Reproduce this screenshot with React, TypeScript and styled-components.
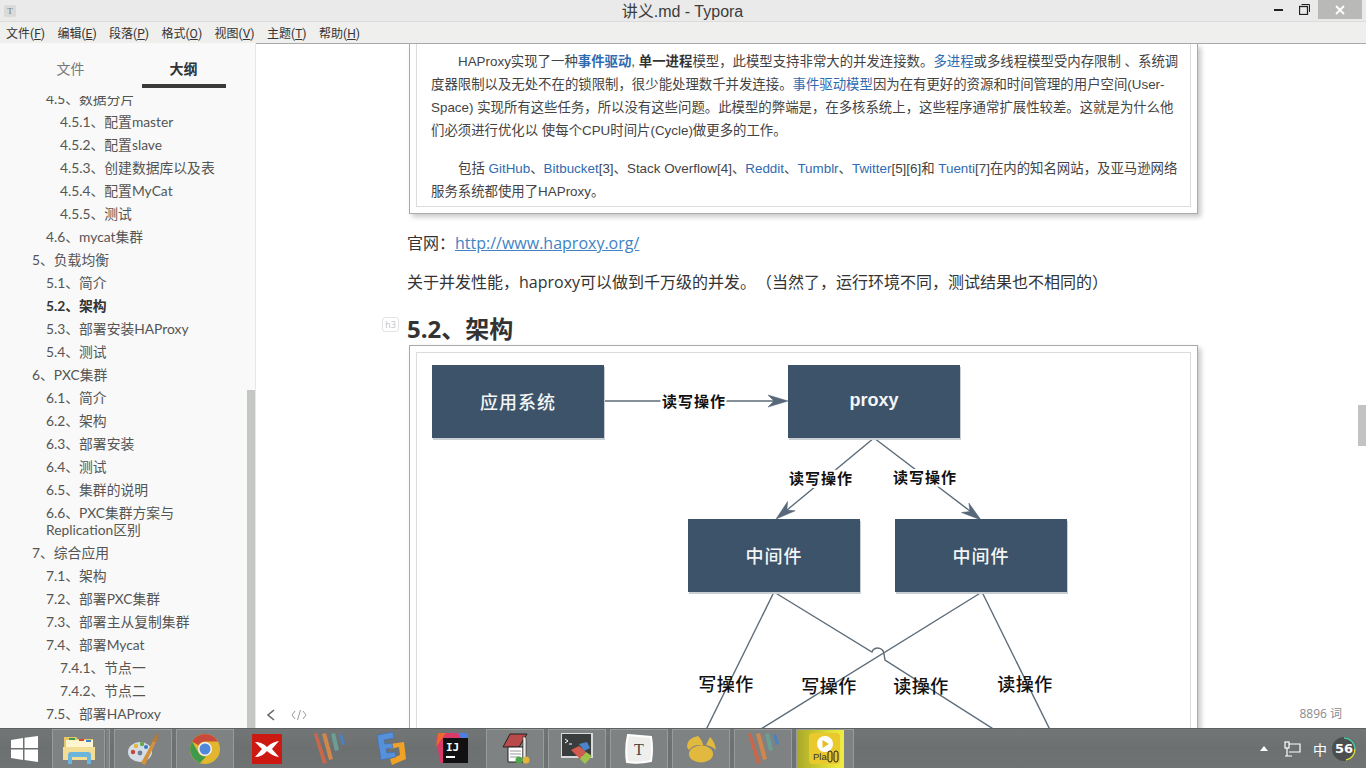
import React from "react";
import styled, { createGlobalStyle } from "styled-components";

const Global = createGlobalStyle`
  html, body { margin: 0; padding: 0; height: 100%; overflow: hidden; }
  * { box-sizing: border-box; }
  body { font-family: "Open Sans", "Noto Sans CJK SC", sans-serif; color: #333; text-spacing-trim: space-all; }
`;

const Page = styled.div`
  width: 1366px; height: 768px; display: flex; flex-direction: column; overflow: hidden; background: #fff;
`;
const TitleBar = styled.div`
  height: 22px; flex: none; display: flex; align-items: flex-start; background: #e9eae9;
  border-bottom: 1px solid #dcdddb; padding-left: 4px;
`;
const AppGlyph = styled.div`
  width: 12px; height: 12px; margin-top: 5px; background: #dadbd9; border-radius: 2px; color: #777;
  font: 9px/12px "Liberation Serif", serif; text-align: center; flex: none;
`;
const TitleText = styled.div`
  flex: 1; text-align: center; font-size: 16px; line-height: 23px; color: #3c3c3c; padding-left: 84px;
  font-family: "Liberation Sans", "Noto Sans CJK SC", sans-serif;
`;
const WindowButtons = styled.div`
  display: flex; align-items: flex-start; flex: none; margin-right: 4px;
`;
const WinButton = styled.div<{ $close?: boolean }>`
  width: ${p => (p.$close ? "44px" : "26px")}; height: 19px; display: flex; align-items: center; justify-content: center;
  background: ${p => (p.$close ? "#b9bab8" : "transparent")};
  margin-left: ${p => (p.$close ? "1px" : "0")};
`;
const MenuBar = styled.div`
  height: 21px; flex: none; display: flex; align-items: center; gap: 12.5px; padding-left: 6px; background: #eff0ee;
  font-size: 12px; color: #333; font-family: Roboto, "Noto Sans CJK SC", sans-serif;
`;
const MenuItem = styled.span`
  white-space: nowrap; u { text-underline-offset: 1px; }
`;
const Body = styled.div`
  flex: 1; min-height: 0; display: flex;
`;
const Sidebar = styled.aside`
  width: 256px; flex: none; display: flex; flex-direction: column; background: #f8f9f8; position: relative;
  border-right: 1px solid #e6e7e6;
`;
const Tabs = styled.div`
  height: 53px; flex: none; display: grid; grid-template-columns: 113px 113px; padding-left: 14px;
`;
const Tab = styled.div<{ $active?: boolean }>`
  height: 45px; display: flex; justify-content: center; align-items: center; font-size: 14px; padding-top: 6px; position: relative;
  padding-bottom: 2px;
  color: ${p => (p.$active ? "#333" : "#777")}; font-weight: ${p => (p.$active ? 700 : 400)};
  ${p => p.$active && `&::after { content: ""; position: absolute; left: 15px; right: 14px; bottom: 0; height: 4px; background: #3a3b38; }`}
`;
const Outline = styled.div`
  flex: 1; min-height: 0; overflow: hidden;
`;
const OutlineList = styled.ul`
  list-style: none; margin: -9.5px 0 0; padding: 0 25px 0 0;
`;
const OutlineRow = styled.li<{ $level: number; $bold?: boolean }>`
  padding: 3px 0 3px ${p => (p.$level === 1 ? 32 : p.$level === 2 ? 46 : 60)}px;
  font-family: Lato, "Noto Sans CJK SC", sans-serif;
  font-size: 13.8px; line-height: 17px; color: ${p => (p.$bold ? "#333" : "#555")}; font-weight: ${p => (p.$bold ? 700 : 400)};
`;
const SideThumb = styled.div`
  position: absolute; right: 0; top: 347px; bottom: 0; width: 8px; background: #c5c7c5;
`;
const Main = styled.main`
  flex: 1; min-width: 0; position: relative; overflow: hidden; background: #fff; border-top: 1px solid #a8a9a8;
  padding-left: 151px;
`;
const Frame = styled.div<{ $clipTop?: boolean }>`
  width: 789px; margin-left: 2px; padding: ${p => (p.$clipTop ? "0 6px 6px" : "6px 6px 0")};
  border: 1px solid #a9aaa9; border-top-width: ${p => (p.$clipTop ? 0 : 1)}px;
  box-shadow: 3px 3px 5px rgba(0,0,0,.22); background: #fff;
`;
const FrameInner = styled.div<{ $clipTop?: boolean }>`
  border: 1px solid #dcdcdc; border-top-width: ${p => (p.$clipTop ? 0 : 1)}px;
  ${p => !p.$clipTop && "height: 500px;"}
`;
const Quote = styled.div`
  padding: 6px 8px 3px 14px; font: 13.4px/23px "Liberation Sans", "Noto Sans CJK SC", sans-serif; color: #444;
`;
const QuoteLine = styled.div<{ $indent?: boolean; $gap?: boolean }>`
  white-space: nowrap;
  padding-left: ${p => (p.$indent ? "27px" : "0")};
  margin-top: ${p => (p.$gap ? "15px" : "0")};
`;
const WikiLink = styled.span<{ $bold?: boolean }>`
  color: #2f6bb0; font-weight: ${p => (p.$bold ? 700 : 400)};
`;
const Strong = styled.b`
  color: #333;
`;
const Para = styled.p<{ $top: number }>`
  margin: ${p => p.$top}px 0 0; font-size: 16px; line-height: 26px; color: #333; white-space: nowrap;
`;
const DocLink = styled.span`
  color: #4183c4; text-decoration: underline;
`;
const Heading = styled.h3`
  margin: 19px 0 1px; font-size: 24px; line-height: 30px; font-weight: 700; color: #333; position: relative;
`;
const HBadge = styled.span`
  position: absolute; left: -25px; top: 3px; width: 17px; height: 15px; border: 1px solid #e2e3e2; border-radius: 3px;
  font-size: 9px; line-height: 13px; font-weight: 400; color: #c2c3c2; text-align: center;
`;
const DiagramSvg = styled.svg`
  display: block; width: 773px; height: 400px;
`;
const FooterNav = styled.div`
  position: absolute; left: 10px; bottom: 6px; display: flex; align-items: center; gap: 15px; color: #777;
`;
const WordCount = styled.div`
  position: absolute; right: 24px; bottom: 6px; font-size: 12px; line-height: 17px; color: #8a8a8a;
`;
const MainThumb = styled.div`
  position: absolute; right: 0; top: 361px; width: 8px; height: 41px; background: #c2c3c2;
`;
const Taskbar = styled.footer`
  height: 40px; flex: none; display: flex; align-items: stretch; gap: 4px;
  background: linear-gradient(#737677, #6d7071 50%, #707374);
  border-top: 1px solid #5f6263;
`;
const StartButton = styled.div`
  width: 48px; display: flex; align-items: center; justify-content: center; flex: none;
`;
const TaskButton = styled.div<{ $plain?: boolean; $w?: number }>`
  width: ${p => p.$w ?? 58}px; flex: none; display: flex; align-items: center; justify-content: center;
  background: ${p => (p.$plain ? "transparent" : "#7f8282")};
  border: 1px solid ${p => (p.$plain ? "transparent" : "#999b9b")};
  border-bottom: 0;
  margin-right: ${p => (p.$w === 53 ? "-3px" : "0")};
`;
const PlayButton = styled(TaskButton)`
  background: linear-gradient(90deg, #a9a828 0, #e2df38 60%, #f1ec45 84%, #7f8282 84%);
`;
const StackTab = styled.div`
  width: 4px; flex: none; background: #7f8282; border: 1px solid #999b9b; border-bottom: 0; border-left: 0;
`;
const Tray = styled.div`
  margin-left: auto; display: flex; align-items: center; padding-right: 10px; color: #fff;
`;
const TrayArrow = styled.div`
  width: 0; height: 0; border: 4px solid transparent; border-top: 0; border-bottom: 5px solid #fff; margin-right: 16px;
`;
const ImeLabel = styled.span`
  font-size: 14px; margin: 0 5px 0 12px; color: #fff;
  font-family: "Noto Sans CJK SC", sans-serif; line-height: 20px;
`;
const Gauge = styled.div`
  position: relative; width: 24px; height: 24px; border-radius: 50%; background: #4b4d4e;
  font: 700 13px/24px "DejaVu Sans", sans-serif; color: #fff; text-align: center;
  svg { position: absolute; inset: 0; }
`;
const PlayLabel = styled.text`
  font: 400 9.5px "Liberation Sans", sans-serif; fill: #333;
`;

const outline: [number, string, boolean?][] = [
  [2, "4.5、数据分片"], [3, "4.5.1、配置master"], [3, "4.5.2、配置slave"], [3, "4.5.3、创建数据库以及表"],
  [3, "4.5.4、配置MyCat"], [3, "4.5.5、测试"], [2, "4.6、mycat集群"], [1, "5、负载均衡"], [2, "5.1、简介"],
  [2, "5.2、架构", true], [2, "5.3、部署安装HAProxy"], [2, "5.4、测试"], [1, "6、PXC集群"], [2, "6.1、简介"],
  [2, "6.2、架构"], [2, "6.3、部署安装"], [2, "6.4、测试"], [2, "6.5、集群的说明"], [2, "6.6、PXC集群方案与 Replication区别"],
  [1, "7、综合应用"], [2, "7.1、架构"], [2, "7.2、部署PXC集群"], [2, "7.3、部署主从复制集群"], [2, "7.4、部署Mycat"],
  [3, "7.4.1、节点一"], [3, "7.4.2、节点二"], [2, "7.5、部署HAProxy"],
];

const menus: [string, string][] = [["文件", "F"], ["编辑", "E"], ["段落", "P"], ["格式", "O"], ["视图", "V"], ["主题", "T"], ["帮助", "H"]];

const diagramFont = '"Liberation Sans", "Noto Sans CJK SC", sans-serif';

const Node = ({ x, y, label }: { x: number; y: number; label: string }) => (
  <g>
    <rect x={x + 1} y={y + 2} width={172} height={73} fill="#c9ced3" />
    <rect x={x} y={y} width={172} height={73} fill="#3c5369" />
    <text x={x + 86} y={y + (label === "proxy" ? 35 : 38)} textAnchor="middle" dominantBaseline="central" fill="#f4f5f6" fontSize={18} fontWeight={label === "proxy" ? 700 : 500} letterSpacing={label === "proxy" ? 0 : 1} fontFamily={diagramFont}>{label}</text>
  </g>
);

const EdgeLabel = ({ x, y, label, bold, size = 15 }: { x: number; y: number; label: string; bold?: boolean; size?: number }) => (
  <text x={x} y={y} textAnchor="middle" dominantBaseline="central" fontSize={size} fontWeight={bold ? 700 : 500} fill="#111" letterSpacing={bold ? 1 : 0.5} stroke="#fff" strokeWidth={bold ? 4 : 0} paintOrder="stroke" fontFamily={diagramFont}>{label}</text>
);

const Arrow = ({ d }: { d: string }) => <path d={d} fill="#56687a" stroke="#4d5d6c" strokeWidth={0.5} />;

const Diagram = () => (
  <DiagramSvg viewBox="417 353 773 400">
    <g fill="none" stroke="#5c6b78" strokeWidth={1.4}>
      <path d="M604 401H776" />
      <path d="M874 438L787 510" />
      <path d="M874 438L970 511" />
      <path d="M774 592L700 742" />
      <path d="M774 592L872 652L873 650A6.4 6.4 0 0 1 884 654L885 660L1020 746" />
      <path d="M982 592L740 742" />
      <path d="M982 592L1056 742" />
    </g>
    <Arrow d="M788 401L768 395L774 401L768 407Z" />
    <Arrow d="M776 519L787.6 501.6L786.8 510L795.2 510.8Z" />
    <Arrow d="M981 520L968.9 503.1L970 511.5L961.5 512.5Z" />
    <Node x={432} y={365} label="应用系统" />
    <Node x={788} y={365} label="proxy" />
    <Node x={688} y={519} label="中间件" />
    <Node x={895} y={519} label="中间件" />
    <EdgeLabel x={694} y={401} label="读写操作" bold />
    <EdgeLabel x={821} y={478} label="读写操作" bold />
    <EdgeLabel x={925} y={477} label="读写操作" bold />
    <EdgeLabel x={726} y={685} label="写操作" size={18} />
    <EdgeLabel x={829} y={687} label="写操作" size={18} />
    <EdgeLabel x={921} y={687} label="读操作" size={18} />
    <EdgeLabel x={1025} y={685} label="读操作" size={18} />
  </DiagramSvg>
);

const WinLogo = () => (
  <svg width="27" height="26" viewBox="0 0 27 26"><path fill="#fff" d="M0 4L12 2V12H0ZM13.5 1.8L27 0V12H13.5ZM0 13.5H12V24L0 22ZM13.5 13.5H27V26L13.5 24Z" /></svg>
);
const ExplorerIcon = () => (
  <svg width="34" height="30" viewBox="0 0 34 30">
    <path d="M2 3H14L16 5H31V26H2Z" fill="#e8c566" />
    <rect x="4" y="6" width="27" height="10" fill="#fff6cf" />
    <rect x="7" y="4" width="6" height="2" fill="#3e9a4a" /><rect x="17" y="5" width="5" height="2" fill="#d4453a" /><rect x="24" y="6" width="5" height="2" fill="#3d86c8" />
    <path d="M1 13H33V26H1Z" fill="#f3dc94" />
    <path d="M6 30V21Q6 18 9 18H26Q29 18 29 21V30H25V23H10V30Z" fill="#6bb4dc" />
  </svg>
);
const PaletteIcon = () => (
  <svg width="32" height="32" viewBox="0 0 32 32">
    <ellipse cx="13" cy="19" rx="12" ry="10" fill="#d5dde6" />
    <circle cx="6" cy="19" r="2.2" fill="#c9453c" /><circle cx="9" cy="13" r="2.2" fill="#e1b93b" /><circle cx="15" cy="11" r="2.2" fill="#63a84a" /><circle cx="19" cy="14" r="2" fill="#3a76c2" /><circle cx="13" cy="20" r="2.4" fill="#6d7f92" />
    <path d="M14 30L26 8L29 9L18 32Z" fill="#d2913a" />
    <path d="M25 8L30 0L31 9Z" fill="#b97a33" />
  </svg>
);
const ChromeIcon = () => (
  <svg width="30" height="30" viewBox="0 0 30 30">
    <circle cx="15" cy="15" r="15" fill="#e2b72f" />
    <path d="M15 0A15 15 0 0 1 28 7.5H15A7.5 7.5 0 0 0 8.5 11.2L2 7.5A15 15 0 0 1 15 0Z" fill="#c94a3a" />
    <path d="M2 7.5L8.5 18.7A7.5 7.5 0 0 0 16 22.4L10 29A15 15 0 0 1 2 7.5Z" fill="#3f9a4c" />
    <circle cx="15" cy="15" r="7" fill="#f0f1f2" /><circle cx="15" cy="15" r="5.5" fill="#4f88d8" />
  </svg>
);
const XIcon = () => (
  <svg width="30" height="30" viewBox="0 0 30 30">
    <rect width="30" height="30" rx="1" fill="#cc1a12" />
    <path d="M3 8Q10 8 15 13Q20 8 27 7L20 15L27 23Q20 22 15 17Q10 23 3 23L10 15Z" fill="#fff" />
  </svg>
);
const PyBars = () => (
  <svg width="34" height="32" viewBox="0 0 34 32">
    <path d="M2 1L5 0L15 30L11 31Z" fill="#c9674a" />
    <path d="M10 1L14 0L21 26L17 27Z" fill="#d2874a" />
    <path d="M19 1L23 0L27 17L23 18Z" fill="#6d9e94" />
    <path d="M27 2L30 1L33 11L30 12Z" fill="#4a82bf" />
  </svg>
);
const EditIcon = () => (
  <svg width="30" height="34" viewBox="0 0 30 34">
    <path d="M14 12L28 10L30 27L16 33L14 27L24 23L23 15L14 17Z" fill="#f0a226" />
    <path d="M1 3L17 0L18 6L8 8L9 12L16 11L17 16L10 17L11 21L19 20L20 25L5 28Z" fill="#5590d8" stroke="#3a6cb0" strokeWidth=".6" />
  </svg>
);
const IdeaIcon = () => (
  <svg width="34" height="32" viewBox="0 0 34 32">
    <path d="M0 4L10 0H24L32 8V30H4Z" fill="#d93a6a" /><path d="M22 0H32V18Z" fill="#4b7fe0" /><path d="M0 14L10 0H2Z" fill="#e86a2c" />
    <rect x="7" y="5" width="25" height="25" fill="#111" />
    <text x="10" y="18" fontSize="11" fontWeight="700" fill="#fff" fontFamily="DejaVu Sans Mono, monospace">IJ</text>
    <rect x="10" y="23" width="9" height="2" fill="#fff" />
  </svg>
);
const NotepadIcon = () => (
  <svg width="32" height="34" viewBox="0 0 32 34">
    <path d="M4 15L11 2H28L20 15Z" fill="#b84a4a" stroke="#222" strokeWidth="1" />
    <path d="M9 15H24V30H9Z" fill="#fff" stroke="#222" />
    <path d="M11 19H22M11 22H22M11 25H20" stroke="#999" />
    <path d="M24 4L27 6V26L24 30Z" fill="#eee" stroke="#222" strokeWidth=".6" />
    <circle cx="20" cy="28" r="3.5" fill="#49a84c" /><circle cx="27" cy="28" r="3.5" fill="#e0b63a" />
  </svg>
);
const TerminalIcon = () => (
  <svg width="32" height="32" viewBox="0 0 32 32">
    <rect x="0" y="0" width="31" height="24" fill="#3a3d3d" stroke="#d9dadb" strokeWidth="2" />
    <path d="M4 6L7 8L4 10M8 11H11" stroke="#fff" fill="none" />
    <path d="M10 17L18 13L25 19L19 26Z" fill="#d45a50" /><path d="M18 11L26 9L29 15L23 18Z" fill="#4c85c7" /><path d="M19 26L25 19L31 23L24 31Z" fill="#9fc24c" />
  </svg>
);
const TyporaIcon = () => (
  <svg width="28" height="30" viewBox="0 0 28 30">
    <path d="M3 1Q14 2 26 3Q28 15 26 27Q14 30 2 28Q0 14 3 1Z" fill="#eeeeec" stroke="#fff" strokeWidth="2" />
    <text x="14" y="21" textAnchor="middle" fontSize="16" fill="#444" fontFamily="Liberation Serif, serif">T</text>
  </svg>
);
const NavicatIcon = () => (
  <svg width="30" height="28" viewBox="0 0 30 28">
    <ellipse cx="15" cy="19" rx="12" ry="8.5" fill="#e2b93f" />
    <path d="M1 12Q1 3 12 1Q17 6 17 11Q9 8 3 15Z" fill="#e2b93f" />
    <path d="M24 2Q29 7 30 15Q26 11 20 10Z" fill="#e2b93f" />
  </svg>
);
const PlayIcon = () => (
  <svg width="32" height="32" viewBox="0 0 32 32">
    <rect width="31" height="31" rx="4" fill="#e9c92c" />
    <circle cx="16" cy="11" r="8" fill="#fff" />
    <path d="M13.5 7L20 11L13.5 15Z" fill="#e5bd25" />
    <PlayLabel x="4" y="27">Pla</PlayLabel>
    <rect x="19" y="18" width="4" height="11" rx="2" fill="none" stroke="#222" />
    <rect x="25" y="18" width="4" height="11" rx="2" fill="none" stroke="#222" />
  </svg>
);

export default function App() {
  return (
    <Page>
      <Global />
      <TitleBar>
        <AppGlyph>T</AppGlyph>
        <TitleText>讲义.md - Typora</TitleText>
        <WindowButtons>
          <WinButton><svg width="9" height="3"><rect width="9" height="2" y="1" fill="#222" /></svg></WinButton>
          <WinButton><svg width="11" height="11" viewBox="0 0 11 11" fill="none" stroke="#222"><rect x=".5" y="2.5" width="8" height="8" strokeWidth="1.3" /><path d="M2.5 .5H10.5V8" /></svg></WinButton>
          <WinButton $close><svg width="10" height="10" viewBox="0 0 10 10" stroke="#fff" strokeWidth="1.8"><path d="M1 1L9 9M9 1L1 9" /></svg></WinButton>
        </WindowButtons>
      </TitleBar>
      <MenuBar>
        {menus.map(([n, k]) => <MenuItem key={k}>{n}(<u>{k}</u>)</MenuItem>)}
      </MenuBar>
      <Body>
        <Sidebar>
          <Tabs><Tab>文件</Tab><Tab $active>大纲</Tab></Tabs>
          <Outline>
            <OutlineList>
              {outline.map(([l, t, b]) => <OutlineRow key={t} $level={l} $bold={b}>{t}</OutlineRow>)}
            </OutlineList>
          </Outline>
          <SideThumb />
        </Sidebar>
        <Main>
          <Frame $clipTop>
            <FrameInner $clipTop>
              <Quote>
                <QuoteLine $indent>HAProxy实现了一种<WikiLink $bold>事件驱动</WikiLink>, <Strong>单一进程</Strong>模型，此模型支持非常大的并发连接数。<WikiLink>多进程</WikiLink>或多线程模型受内存限制 、系统调</QuoteLine>
                <QuoteLine>度器限制以及无处不在的锁限制，很少能处理数千并发连接。<WikiLink>事件驱动模型</WikiLink>因为在有更好的资源和时间管理的用户空间(User-</QuoteLine>
                <QuoteLine>Space) 实现所有这些任务，所以没有这些问题。此模型的弊端是，在多核系统上，这些程序通常扩展性较差。这就是为什么他</QuoteLine>
                <QuoteLine>们必须进行优化以 使每个CPU时间片(Cycle)做更多的工作。</QuoteLine>
                <QuoteLine $indent $gap>包括 <WikiLink>GitHub</WikiLink>、<WikiLink>Bitbucket</WikiLink>[3]、Stack Overflow[4]、<WikiLink>Reddit</WikiLink>、<WikiLink>Tumblr</WikiLink>、<WikiLink>Twitter</WikiLink>[5][6]和 <WikiLink>Tuenti</WikiLink>[7]在内的知名网站，及亚马逊网络</QuoteLine>
                <QuoteLine>服务系统都使用了HAProxy。</QuoteLine>
              </Quote>
            </FrameInner>
          </Frame>
          <Para $top={16}>官网：<DocLink>http://www.haproxy.org/</DocLink></Para>
          <Para $top={13}>关于并发性能，haproxy可以做到千万级的并发。（当然了，运行环境不同，测试结果也不相同的）</Para>
          <Heading><HBadge>h3</HBadge>5.2、架构</Heading>
          <Frame>
            <FrameInner><Diagram /></FrameInner>
          </Frame>
          <FooterNav>
            <svg width="10" height="14" viewBox="0 0 10 14" fill="none" stroke="#666" strokeWidth="1.6"><path d="M8 2L2 7L8 12" /></svg>
            <svg width="16" height="12" viewBox="0 0 16 12" fill="none" stroke="#999" strokeWidth="1"><path d="M4 2L1 6L4 10M12 2L15 6L12 10M9.5 1L6.5 11" /></svg>
          </FooterNav>
          <WordCount>8896 词</WordCount>
          <MainThumb />
        </Main>
      </Body>
      <Taskbar>
        <StartButton><WinLogo /></StartButton>
        <TaskButton $w={53}><ExplorerIcon /></TaskButton>
        <StackTab />
        <TaskButton><PaletteIcon /></TaskButton>
        <TaskButton><ChromeIcon /></TaskButton>
        <TaskButton $plain><XIcon /></TaskButton>
        <TaskButton $plain><PyBars /></TaskButton>
        <TaskButton $plain><EditIcon /></TaskButton>
        <TaskButton $plain><IdeaIcon /></TaskButton>
        <TaskButton><NotepadIcon /></TaskButton>
        <TaskButton><TerminalIcon /></TaskButton>
        <TaskButton><TyporaIcon /></TaskButton>
        <TaskButton><NavicatIcon /></TaskButton>
        <TaskButton><PyBars /></TaskButton>
        <PlayButton><PlayIcon /></PlayButton>
        <Tray>
          <TrayArrow />
          <svg width="17" height="16" viewBox="0 0 17 16" fill="none" stroke="#fff" strokeWidth="1.2"><rect x="1" y="1" width="4" height="6" /><path d="M5 3H16V11H5M3 7V15M1 15H8" /></svg>
          <ImeLabel>中</ImeLabel>
          <Gauge>
            56
            <svg width="24" height="24" viewBox="0 0 24 24" fill="none" strokeWidth="1.6"><path d="M12 1A11 11 0 0 1 23 12" stroke="#4fc3a1" /><path d="M23 12A11 11 0 0 1 14 23" stroke="#d6d84e" /></svg>
          </Gauge>
        </Tray>
      </Taskbar>
    </Page>
  );
}
